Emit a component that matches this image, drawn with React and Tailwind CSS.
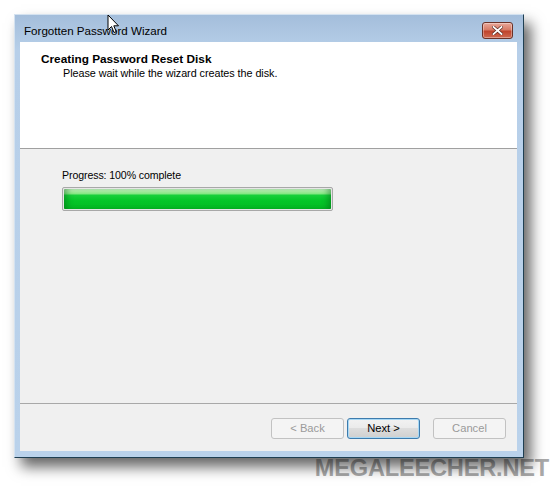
import React from "react";

const ui = { fontFamily: '"Liberation Sans", Arial, sans-serif' };

function CloseButton() {
  return (
    <div className="mt-[7px] w-[31px] h-[17px] rounded-[3px] border border-[#6b3228] bg-[linear-gradient(to_bottom,#e9a89a_0%,#d77b66_45%,#c0442d_55%,#cf6a52_100%)] shadow-[inset_0_0_0_1px_rgba(255,255,255,0.35)] flex items-center justify-center">
      <svg width="11" height="9" viewBox="0 0 11 9">
        <path d="M1.5 1 L9.5 8 M9.5 1 L1.5 8" stroke="#5a2a22" strokeWidth="3.2" strokeLinecap="square" />
        <path d="M1.5 1 L9.5 8 M9.5 1 L1.5 8" stroke="#ffffff" strokeWidth="1.8" strokeLinecap="square" />
      </svg>
    </div>
  );
}

function Cursor() {
  return (
    <svg className="absolute left-[92px] top-[-1px]" width="13" height="20" viewBox="0 0 13 20">
      <path
        d="M1 1 L1 16 L4.5 12.5 L7 18.5 L9.2 17.6 L6.8 11.8 L11.5 11.8 Z"
        fill="#ffffff"
        stroke="#000000"
        strokeWidth="1"
        strokeLinejoin="round"
      />
    </svg>
  );
}

function WizardButton({ label, primary, disabled }) {
  const base = "h-[21px] w-[73px] rounded-[3px] flex items-center justify-center text-[11.2px] leading-none";
  if (primary) {
    return (
      <div className={`${base} border border-[#3d7bad] bg-[linear-gradient(to_bottom,#f2f2f2_0%,#ebebeb_45%,#dddddd_50%,#cfcfcf_100%)] shadow-[inset_0_0_0_1px_#a7d8f5] text-black`}>
        {label}
      </div>
    );
  }
  return (
    <div className={`${base} border border-[#c2c2c2] bg-[#f4f4f4] ${disabled ? "text-[#9a9a9a]" : "text-black"}`}>
      {label}
    </div>
  );
}

export default function App() {
  return (
    <div className="w-[559px] h-[494px] bg-white overflow-hidden" style={ui}>
      <div className="pt-[14px] pl-[14px]">
        <div className="relative w-[510px] h-[444px] flex flex-col border-l border-t border-[#d4e2f0] border-r border-b border-r-[#1f3f52] border-b-[#1f3f52] bg-[linear-gradient(to_bottom,#a4bedb_0%,#b7cfe9_8%,#bad2eb_100%)] shadow-[7px_9px_13px_rgba(0,0,0,0.6)]">
          {/* title bar */}
          <div className="relative h-[27px] flex items-start justify-between pl-[9px] pr-[10px]">
            <span className="mt-[8px] text-[11.6px] leading-[16px] text-black">Forgotten Password Wizard</span>
            <CloseButton />
            <Cursor />
          </div>

          {/* client area */}
          <div className="flex-1 ml-[5px] mr-[6px] mb-[6px] flex flex-col bg-[#f0f0f0]">
            <div className="h-[107px] bg-white border-b border-[#a0a0a0] pt-[10px]">
              <div className="pl-[21px] text-[11.8px] leading-[14px] font-bold text-black">Creating Password Reset Disk</div>
              <div className="pl-[43px] text-[10.8px] leading-[14px] tracking-[-0.05px] text-black">Please wait while the wizard creates the disk.</div>
            </div>

            <div className="flex-1 pl-[42px] pt-[19px]">
              <div className="text-[10.6px] leading-[14px] tracking-[-0.1px] text-black">Progress: 100% complete</div>
              <div className="mt-[5px] w-[271px] h-[24px] border border-[#a8a8a8] rounded-[2px] p-px bg-[#e6e6e6]">
                <div className="w-full h-full rounded-[1px] bg-[linear-gradient(to_bottom,#c9f5c4_0%,#8ee98a_22%,#18cf3a_32%,#04c527_60%,#05bb24_100%)] shadow-[inset_6px_0_6px_-3px_rgba(0,90,20,0.45),inset_-6px_0_6px_-3px_rgba(0,90,20,0.45)]" />
              </div>
            </div>

            <div className="h-[48px] border-t border-[#a8a8a8] flex items-start justify-end pt-[14px] pr-[11px]">
              <WizardButton label="< Back" disabled />
              <div className="ml-[3px]">
                <WizardButton label="Next >" primary />
              </div>
              <div className="ml-[13px]">
                <WizardButton label="Cancel" disabled />
              </div>
            </div>
          </div>
        </div>

        <div className="-mt-[2px] pr-[10px] flex justify-end">
          <span className="text-[23.6px] leading-[24px] font-bold tracking-[-0.2px] text-[#a9a9a9] [text-shadow:0_1px_0_rgba(255,255,255,0.6)]">
            MEGALEECHER.NET
          </span>
        </div>
      </div>
    </div>
  );
}
